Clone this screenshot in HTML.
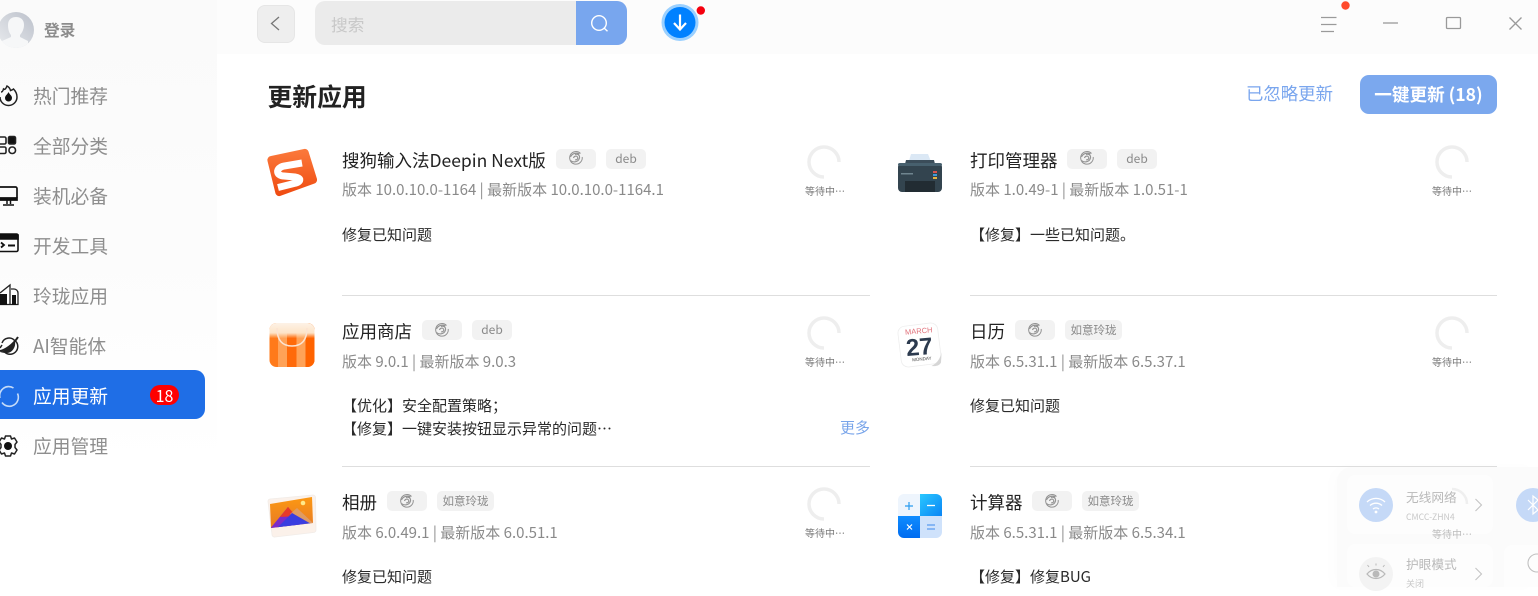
<!DOCTYPE html>
<html lang="zh"><head><meta charset="utf-8"><title>更新应用</title>
<style>
html,body{margin:0;padding:0;width:1538px;height:587px;overflow:hidden;background:#fff;font-family:"Noto Sans CJK SC","Liberation Sans",sans-serif}
.a{position:absolute}
.t{position:absolute;white-space:nowrap;line-height:24px;height:24px}
.side{left:33px;font-size:18.75px;color:#8e8e8e}
.name{font-size:17.5px;color:#222}
.ver{font-size:15px;color:#8a8a8a}
.desc{font-size:15px;color:#2a2a2a}
.tag{position:absolute;height:20px;background:#f2f2f2;border-radius:5px;font-size:12px;line-height:20px;color:#8a8a8a;text-align:center}
.wait{position:absolute;font-size:10px;color:#777;line-height:12px;white-space:nowrap}
.hr{position:absolute;height:1px;background:#dedede}
svg{position:absolute;overflow:visible}
</style></head><body>

<!-- sidebar -->
<div class="a" style="left:0;top:0;width:217px;height:587px;background:linear-gradient(180deg,#fafafa 0,#fcfcfc 40%,#fff 80%)"></div>
<svg style="left:-2px;top:12px" width="36" height="36" viewBox="0 0 36 36"><defs><clipPath id="av"><circle cx="18" cy="18" r="18"/></clipPath><linearGradient id="avg" x1="1" y1="0" x2="0" y2="1"><stop offset="0" stop-color="#bcc1cb"/><stop offset="1" stop-color="#e9ebee"/></linearGradient></defs><circle cx="18" cy="18" r="18" fill="url(#avg)"/><g clip-path="url(#av)"><path d="M10 13c0-6 4-8 8-8s8 2 8 8c0 4-2 8-4 10v2l8 4v8H4v-8l9-4v-2c-2-2-3-6-3-10z" fill="#f6f7f8"/></g></svg>
<div class="t" style="left:44px;top:18px;font-size:15.7px;font-weight:700;color:#8c8c8c">登录</div>

<div class="t side" style="top:84px">热门推荐</div>
<div class="t side" style="top:134px">全部分类</div>
<div class="t side" style="top:184px">装机必备</div>
<div class="t side" style="top:234px">开发工具</div>
<div class="t side" style="top:284px">玲珑应用</div>
<div class="t side" style="top:334px">AI智能体</div>
<div class="a" style="left:0;top:370px;width:205px;height:49px;background:#1f6ee6;border-radius:0 10px 10px 0"></div>
<div class="t side" style="top:384px;color:#fff">应用更新</div>
<div class="a" style="left:150px;top:385px;width:29px;height:20px;border-radius:10px;background:#f00;color:#fff;font-size:16px;line-height:20px;text-align:center">18</div>
<div class="t side" style="top:434px">应用管理</div>

<!-- sidebar icons -->
<svg style="left:0;top:83px" width="20" height="24" viewBox="0 0 20 24" fill="none" stroke="#222"><path d="M1 9c1 0 2-1 2.500-3C5 7 6 5.500 7 3c2 1 3 2.500 3.500 4.500C12 7 13 6.500 13.500 6c1.500 1.500 3.500 4 3.500 8a8.500 8.500 0 0 1-17 0" stroke-width="1.500"/><path d="M8.500 9c1 2.500 3.500 3.500 3.500 6a3.500 3.500 0 0 1-7 0c0-2.500 2.500-3.500 3.500-6z" fill="#111" stroke="none"/></svg>
<svg style="left:0;top:136px" width="17" height="19" viewBox="0 0 17 19" fill="none" stroke="#222" stroke-width="1.600"><rect x="-2" y="1" width="8" height="7" rx="1.500"/><rect x="8.500" y="0.500" width="7" height="7.500" rx="1.500" fill="#111"/><rect x="-2" y="11" width="8" height="6.500" rx="1.500"/><rect x="9" y="11" width="6.500" height="6.500" rx="3"/></svg>
<svg style="left:0;top:186px" width="19" height="20" viewBox="0 0 19 20" fill="none" stroke="#111" stroke-width="1.700"><path d="M0 1h15.500a1.500 1.500 0 0 1 1.500 1.500V11a1.500 1.500 0 0 1-1.500 1.500H0"/><path d="M0 12h17v2H0z" fill="#111"/><path d="M7 14v4M10.500 14v4M3 19h11" stroke-width="1.500"/></svg>
<svg style="left:0;top:230px" width="19" height="24" viewBox="0 0 19 24" fill="none" stroke="#111" stroke-width="1.600"><path d="M0 4h16.500a1.500 1.500 0 0 1 1.500 1.500V20a1.500 1.500 0 0 1-1.500 1.500H0"/><path d="M0 5h18v4H0z" fill="#111"/><path d="M1 12.500l3 2.500-3 2.500" stroke-width="1.800"/><path d="M8 15.500h7" stroke-width="2"/></svg>
<svg style="left:0;top:283px" width="19" height="24" viewBox="0 0 19 24" fill="none" stroke="#222" stroke-width="1.300"><path d="M0 10L10 2V21.500"/><path d="M11 6h3a4 4 0 0 1 4 4v11.500H0"/><rect x="0" y="11" width="7" height="11" fill="#111" stroke="none"/><rect x="12" y="12" width="4" height="10" fill="#111" stroke="none"/></svg>
<svg style="left:0;top:334px" width="20" height="24" viewBox="0 0 20 24" fill="none" stroke="#222" stroke-width="1.500"><path d="M2 9a7.500 7.500 0 0 1 13-2"/><path d="M0 17C5 16 13 11 18 3" stroke-width="2"/><path d="M15.500 7a7.500 7.500 0 0 1-11 11"/><path d="M2 11l-2 3"/><path d="M0 18c4-1 11-5 15-10 1 5-3 11-8 11-3 0-5-.5-7-1z" fill="#222" stroke="none"/></svg>
<svg style="left:-2px;top:385px" width="22" height="22" viewBox="0 0 22 22" fill="none" stroke="#c3daf8" stroke-width="1.600"><path d="M2 13A9 9 0 0 1 15.500 3"/><path d="M19.500 8.500A9 9 0 0 1 4 17.500"/></svg>
<svg style="left:-3px;top:434px" width="22" height="24" viewBox="0 0 22 24" fill="none" stroke="#222" stroke-width="1.500"><path d="M8.500 2h5l1 3 3-1 2.500 4-2 2.500v3l2 2.500-2.500 4-3-1-1 3h-5l-1-3-3 1L2 16l2-2.500v-3L2 8l2.500-4 3 1z" stroke-linejoin="round"/><circle cx="11" cy="12" r="4" fill="#111" stroke="none"/></svg>

<!-- topbar -->
<div class="a" style="left:217px;top:0;width:1321px;height:54px;background:#fcfcfc"></div>
<div class="a" style="left:257px;top:5px;width:36px;height:36px;background:#eee;border:1px solid #e6e6e6;border-radius:8px"></div>
<svg style="left:257px;top:5px" width="38" height="38" fill="none" stroke="#777" stroke-width="1.300"><path d="M22 12l-7.500 6.500L22 25"/></svg>
<div class="a" style="left:315px;top:1px;width:312px;height:44px;background:#ebebeb;border-radius:10px;overflow:hidden"><div class="a" style="left:261px;top:0;width:51px;height:44px;background:#78a6ee"></div></div>
<div class="t" style="left:331px;top:11.5px;font-size:16.7px;color:#c8c8c8">搜索</div>
<svg style="left:589px;top:13px" width="22" height="22" fill="none" stroke="#fff" stroke-width="1.400"><circle cx="10" cy="10" r="7.300"/><path d="M15.300 15.300l3.200 3"/></svg>
<svg style="left:660px;top:3px" width="42" height="42" viewBox="0 0 42 42"><circle cx="20" cy="19.500" r="18.500" fill="#9ad0ff"/><circle cx="20" cy="19.500" r="15.500" fill="#0081ff"/><path d="M20 11.500v15M14 20l6 6.500 6-6.500" fill="none" stroke="#fff" stroke-width="2.200"/><circle cx="40.800" cy="7.500" r="4.200" fill="#f5000e"/></svg>

<svg style="left:1315px;top:0" width="223" height="40" fill="none" stroke="#9a9a9a" stroke-width="1.200"><path d="M6 17.500h15.500M6 24.500h15.500M6 31.500h13"/><circle cx="30.500" cy="5.500" r="4.200" fill="#ff4a2b" stroke="none"/><path d="M68 23h15" stroke-width="1.300"/><rect x="131.500" y="17.500" width="14" height="11" rx="1" stroke-width="1.300"/><path d="M194.500 17.500l12 12M206.500 17.500l-12 12" stroke-width="1.300"/></svg>

<!-- header -->
<div class="t" style="left:267.500px;top:84px;font-size:24.8px;font-weight:700;color:#222">更新应用</div>
<div class="t" style="left:1246px;top:82px;font-size:17.4px;color:#7aa6ee">已忽略更新</div>
<div class="a" style="left:1360px;top:75px;width:137px;height:39px;background:#7ba8ee;border-radius:9px;color:#fff;font-size:17.6px;font-weight:700;line-height:39px;text-align:center;white-space:nowrap">一键更新 (18)</div>

<!-- row 1 -->
<svg style="left:266px;top:148px" width="52" height="50" viewBox="0 0 52 50"><defs><linearGradient id="sg" x1="0" y1="0" x2="0" y2="1"><stop offset="0" stop-color="#fb7a3c"/><stop offset="1" stop-color="#ef4a10"/></linearGradient></defs><path d="M5 8L38 1a4 4 0 0 1 4.500 2.500L51 31a4 4 0 0 1-2.500 4.500L14 48a4 4 0 0 1-4.500-2.500L1.500 13A4 4 0 0 1 5 8z" fill="url(#sg)"/><path d="M36 15L18 18C9 20 10 28 18 28L29 29C36 30 35 34 28 35.500L12 39.500" fill="none" stroke="#fff" stroke-width="7"/></svg>
<div class="t name" style="left:342px;top:148.500px">搜狗输入法Deepin Next版</div>
<div class="tag" style="left:556px;top:149px;width:40px"></div>
<div class="tag" style="left:606px;top:149px;width:40px">deb</div>
<div class="t ver" style="left:342px;top:177.500px">版本 10.0.10.0-1164 | 最新版本 10.0.10.0-1164.1</div>
<div class="t desc" style="left:342px;top:222.500px">修复已知问题</div>
<svg style="left:806px;top:144px" width="36" height="36" fill="none" stroke="#eee" stroke-width="3.500"><path d="M18 33A15 15 0 1 1 33 18"/></svg>
<div class="wait" style="left:805px;top:185px">等待中⋯</div>

<svg style="left:897px;top:151px" width="46" height="46" viewBox="0 0 46 46"><path d="M11 13l3-10h17l4 10z" fill="#dbe8f5"/><path d="M8 13l1-4h28l1 4z" fill="#3b4d5a"/><rect x="1" y="12" width="44" height="29" rx="4" fill="#33444f"/><rect x="1" y="12" width="44" height="3" rx="2" fill="#47606e"/><rect x="8" y="30" width="30" height="11" fill="#222c33"/><rect x="36" y="20" width="4" height="2" fill="#d9534f"/><rect x="36" y="23" width="4" height="2" fill="#3d9bd9"/><rect x="36" y="26" width="4" height="2" fill="#e3b341"/><rect x="4" y="22" width="12" height="1.500" fill="#6f858f"/></svg>
<div class="t name" style="left:970px;top:148.500px">打印管理器</div>
<div class="tag" style="left:1067px;top:149px;width:40px"></div>
<div class="tag" style="left:1117px;top:149px;width:40px">deb</div>
<div class="t ver" style="left:970px;top:177.500px">版本 1.0.49-1 | 最新版本 1.0.51-1</div>
<div class="t desc" style="left:970px;top:222.500px">【修复】一些已知问题。</div>
<svg style="left:1434px;top:144px" width="36" height="36" fill="none" stroke="#eee" stroke-width="3.500"><path d="M18 33A15 15 0 1 1 33 18"/></svg>
<div class="wait" style="left:1432px;top:185px">等待中⋯</div>

<div class="hr" style="left:342px;top:295px;width:528px"></div>
<div class="hr" style="left:970px;top:295px;width:527px"></div>

<!-- row 2 -->
<svg style="left:269px;top:323px" width="46" height="45" viewBox="0 0 46 45"><defs><clipPath id="st"><rect width="45" height="44" rx="7" x="0.500"/></clipPath><linearGradient id="stf" x1="0" y1="0" x2="0" y2="1"><stop offset="0" stop-color="#fdf2e6"/><stop offset="0.22" stop-color="#fde4c8"/><stop offset="0.34" stop-color="#fde4c8" stop-opacity="0"/></linearGradient></defs><g clip-path="url(#st)"><rect x="0" y="0" width="46" height="45" fill="#ff7a1a"/><rect x="9" y="0" width="9" height="45" fill="#ffa257"/><rect x="18" y="0" width="9.500" height="45" fill="#ff6a0a"/><rect x="27.500" y="0" width="9" height="45" fill="#ffa257"/><rect x="36.500" y="0" width="10" height="45" fill="#ff6300"/><rect x="0" y="0" width="46" height="45" fill="url(#stf)"/></g><path d="M8 5c0 13 6 18 15 18s15-5 15-18" fill="none" stroke="#fbe3d2" stroke-width="1.500"/></svg>
<div class="t name" style="left:342px;top:319.500px">应用商店</div>
<div class="tag" style="left:422px;top:320px;width:40px"></div>
<div class="tag" style="left:472px;top:320px;width:40px">deb</div>
<div class="t ver" style="left:342px;top:349.500px">版本 9.0.1 | 最新版本 9.0.3</div>
<div class="t desc" style="left:342px;top:393.500px">【优化】安全配置策略；</div>
<div class="t desc" style="left:342px;top:416.500px">【修复】一键安装按钮显示异常的问题⋯</div>
<div class="t" style="left:840px;top:416px;font-size:15px;color:#79a5ea">更多</div>
<svg style="left:806px;top:315px" width="36" height="36" fill="none" stroke="#eee" stroke-width="3.500"><path d="M18 33A15 15 0 1 1 33 18"/></svg>
<div class="wait" style="left:805px;top:356px">等待中⋯</div>

<svg style="left:895px;top:320px" width="50" height="50" viewBox="0 0 50 50"><rect x="4.500" y="4.500" width="40" height="41" rx="7" transform="rotate(-7 24.500 25)" fill="#fff" stroke="#eeeeee" stroke-width="0.800"/><path d="M46.500 32c-1 6-4 11-10 14 5 .5 8-.5 9.500-3.500z" fill="#d6d6d6"/><text x="24" y="13.500" font-size="7.500" text-anchor="middle" fill="#e0707a" font-family="Liberation Sans" transform="rotate(-5 24 13.500)">MARCH</text><text x="25" y="35" font-size="24" font-weight="700" text-anchor="middle" fill="#2c3a4e" font-family="Liberation Sans" transform="rotate(-5 25 35)">27</text><text x="27" y="40.500" font-size="4.500" text-anchor="middle" fill="#444" font-family="Liberation Sans" transform="rotate(-5 27 40.500)">MONDAY</text></svg>
<div class="t name" style="left:970px;top:319.500px">日历</div>
<div class="tag" style="left:1015px;top:320px;width:40px"></div>
<div class="tag" style="left:1065px;top:320px;width:57px;font-size:11.500px">如意玲珑</div>
<div class="t ver" style="left:970px;top:349.500px">版本 6.5.31.1 | 最新版本 6.5.37.1</div>
<div class="t desc" style="left:970px;top:393.500px">修复已知问题</div>
<svg style="left:1434px;top:315px" width="36" height="36" fill="none" stroke="#eee" stroke-width="3.500"><path d="M18 33A15 15 0 1 1 33 18"/></svg>
<div class="wait" style="left:1432px;top:356px">等待中⋯</div>

<div class="hr" style="left:342px;top:466px;width:528px"></div>
<div class="hr" style="left:970px;top:466px;width:527px"></div>

<!-- row 3 -->
<svg style="left:267px;top:493px" width="50" height="46" viewBox="0 0 50 46"><defs><linearGradient id="ph" x1="0" y1="0" x2="0" y2="1"><stop offset="0" stop-color="#ff9c10"/><stop offset="1" stop-color="#e0702a"/></linearGradient><clipPath id="phc"><path d="M3 11L45 4 46 30 4 35z"/></clipPath></defs><path d="M3 6L46 2a2.500 2.500 0 0 1 2.500 2.500L49 37a2.500 2.500 0 0 1-2.500 2.500L8 44a2.500 2.500 0 0 1-3-2.500L1 8.500A2.500 2.500 0 0 1 3 6z" fill="#fbf1ea" stroke="#f1ece8" stroke-width="0.800"/><g clip-path="url(#phc)"><rect x="0" y="0" width="50" height="46" fill="url(#ph)"/><path d="M2 37L21 14 36 34z" fill="#7c2bc9"/><path d="M21 14l-8 10 16-1z" fill="#e83a2a"/><path d="M23 21l7-6 17 16-6 3z" fill="#d9a27a" opacity=".75"/><path d="M9 36l16-16 21 12v6z" fill="#3a3de0"/></g><circle cx="36" cy="10" r="2.300" fill="#ffe98a"/></svg>
<div class="t name" style="left:342px;top:490.500px">相册</div>
<div class="tag" style="left:387px;top:491px;width:40px"></div>
<div class="tag" style="left:437px;top:491px;width:57px;font-size:11.500px">如意玲珑</div>
<div class="t ver" style="left:342px;top:520.500px">版本 6.0.49.1 | 最新版本 6.0.51.1</div>
<div class="t desc" style="left:342px;top:564.500px">修复已知问题</div>
<svg style="left:806px;top:486px" width="36" height="36" fill="none" stroke="#eee" stroke-width="3.500"><path d="M18 33A15 15 0 1 1 33 18"/></svg>
<div class="wait" style="left:805px;top:527px">等待中⋯</div>

<svg style="left:898px;top:494px" width="44" height="44" viewBox="0 0 44 44"><defs><clipPath id="ca"><rect width="44" height="44" rx="6"/></clipPath><linearGradient id="c1" x1="0" y1="0" x2="1" y2="1"><stop offset="0" stop-color="#2ac8ff"/><stop offset="1" stop-color="#0a85f5"/></linearGradient><linearGradient id="c2" x1="0" y1="0" x2="0" y2="1"><stop offset="0" stop-color="#0f8cff"/><stop offset="1" stop-color="#006cf0"/></linearGradient></defs><g clip-path="url(#ca)"><rect width="22" height="22" fill="#eef5fd"/><rect x="22" width="22" height="22" fill="url(#c1)"/><rect y="22" width="22" height="22" fill="url(#c2)"/><rect x="22" y="22" width="22" height="22" fill="#cfe2fb"/></g><path d="M7 12h8M11 8v8" stroke="#2a9cf0" stroke-width="1.200"/><path d="M29 11.500h8" stroke="#fff" stroke-width="1.300"/><path d="M9 30.500l5 5M14 30.500l-5 5" stroke="#fff" stroke-width="1.200"/><path d="M29 31h8M29 35h8" stroke="#5a9cf0" stroke-width="1.300"/></svg>
<div class="t name" style="left:970px;top:490.500px">计算器</div>
<div class="tag" style="left:1032px;top:491px;width:40px"></div>
<div class="tag" style="left:1082px;top:491px;width:57px;font-size:11.500px">如意玲珑</div>
<div class="t ver" style="left:970px;top:520.500px">版本 6.5.31.1 | 最新版本 6.5.34.1</div>
<div class="t desc" style="left:970px;top:564.500px">【修复】修复BUG</div>

<!-- deepin tag glyphs -->
<svg width="0" height="0" style="left:0;top:0"><defs><g id="dp" fill="none" stroke="#929292"><path d="M11.500 2.500A6.300 6.300 0 1 0 13.200 6" stroke-width="1"/><path d="M1.500 9.500c3 2.500 8 1.500 9-2.500.5-3-2-4.500-4.500-3.500M4.500 7c.5-2 3-2.500 4-1s-.5 3.200-2.500 2.800M1.500 6c1.500-3.500 6-5 9-3" stroke-width="1.100"/></g></defs></svg>
<svg style="left:569px;top:151px" width="14" height="14"><use href="#dp"/></svg>
<svg style="left:1080px;top:151px" width="14" height="14"><use href="#dp"/></svg>
<svg style="left:435px;top:323px" width="14" height="14"><use href="#dp"/></svg>
<svg style="left:1028px;top:323px" width="14" height="14"><use href="#dp"/></svg>
<svg style="left:400px;top:494px" width="14" height="14"><use href="#dp"/></svg>
<svg style="left:1045px;top:494px" width="14" height="14"><use href="#dp"/></svg>

<!-- translucent control panel -->
<div class="a" style="left:1337px;top:467px;width:201px;height:120px;background:rgba(250,250,250,.85);border-radius:14px 0 0 0;box-shadow:-6px 0 14px rgba(0,0,0,.012)"></div>
<div class="a" style="left:1347px;top:475px;width:146px;height:59px;background:rgba(255,255,255,.5);border-radius:8px"></div>
<div class="a" style="left:1347px;top:544px;width:146px;height:43px;background:rgba(255,255,255,.5);border-radius:8px"></div>
<div class="a" style="left:1504px;top:545px;width:34px;height:42px;background:rgba(255,255,255,.6);border-radius:8px 0 0 0"></div>
<svg style="left:1434px;top:486px" width="36" height="36" fill="none" stroke="#efefef" stroke-width="2.500"><path d="M18 3A15 15 0 0 1 33 18"/></svg>
<svg style="left:1359px;top:488px" width="34" height="34" fill="none" stroke="#fff" stroke-width="1.300"><circle cx="17" cy="17" r="17" fill="#c5d9f7" stroke="none"/><path d="M8 14a13 13 0 0 1 18 0M11 17.500a9 9 0 0 1 12 0M14 21a4.500 4.500 0 0 1 6 0"/><circle cx="17" cy="24" r="1.400" fill="#fff" stroke="none"/></svg>
<div class="t" style="left:1406px;top:485px;font-size:12.700px;color:#b9b9b9">无线网络</div>
<div class="t" style="left:1406px;top:505px;font-size:8.700px;color:#c8c8c8">CMCC-ZHN4</div>
<div class="wait" style="left:1432px;top:528px;color:#bbb">等待中⋯</div>
<svg style="left:1474px;top:497px" width="10" height="16" fill="none" stroke="#c4c4c4" stroke-width="1.100"><path d="M1.500 2l6 6-6 6"/></svg>
<svg style="left:1516px;top:488px" width="22" height="34" fill="none" stroke="#fff" stroke-width="1.200"><circle cx="17" cy="17" r="17" fill="#c5d9f7" stroke="none"/><path d="M12 12l10 10-5 4V8l5 4-10 10"/></svg>
<svg style="left:1359px;top:557px" width="34" height="30" fill="none" stroke="#b9b9b9" stroke-width="1.200"><circle cx="17" cy="17" r="17" fill="#f3f3f3" stroke="none"/><path d="M8 17c5-6 13-6 18 0-5 6-13 6-18 0z"/><circle cx="17" cy="17" r="3.500" fill="#b9b9b9" stroke="none"/><path d="M10 10l-1.500-2M17 8.500V6.500M24 10l1.500-2" stroke-width="1"/></svg>
<div class="t" style="left:1406px;top:552px;font-size:12.700px;color:#b9b9b9">护眼模式</div>
<div class="t" style="left:1406px;top:572px;font-size:9px;color:#c8c8c8">关闭</div>
<svg style="left:1474px;top:566px" width="10" height="16" fill="none" stroke="#c4c4c4" stroke-width="1.100"><path d="M1.500 2l6 6-6 6"/></svg>
<svg style="left:1527px;top:553px" width="11" height="20" fill="none" stroke="#c0c0c0" stroke-width="1.100"><circle cx="10" cy="10" r="9"/></svg>
</body></html>
